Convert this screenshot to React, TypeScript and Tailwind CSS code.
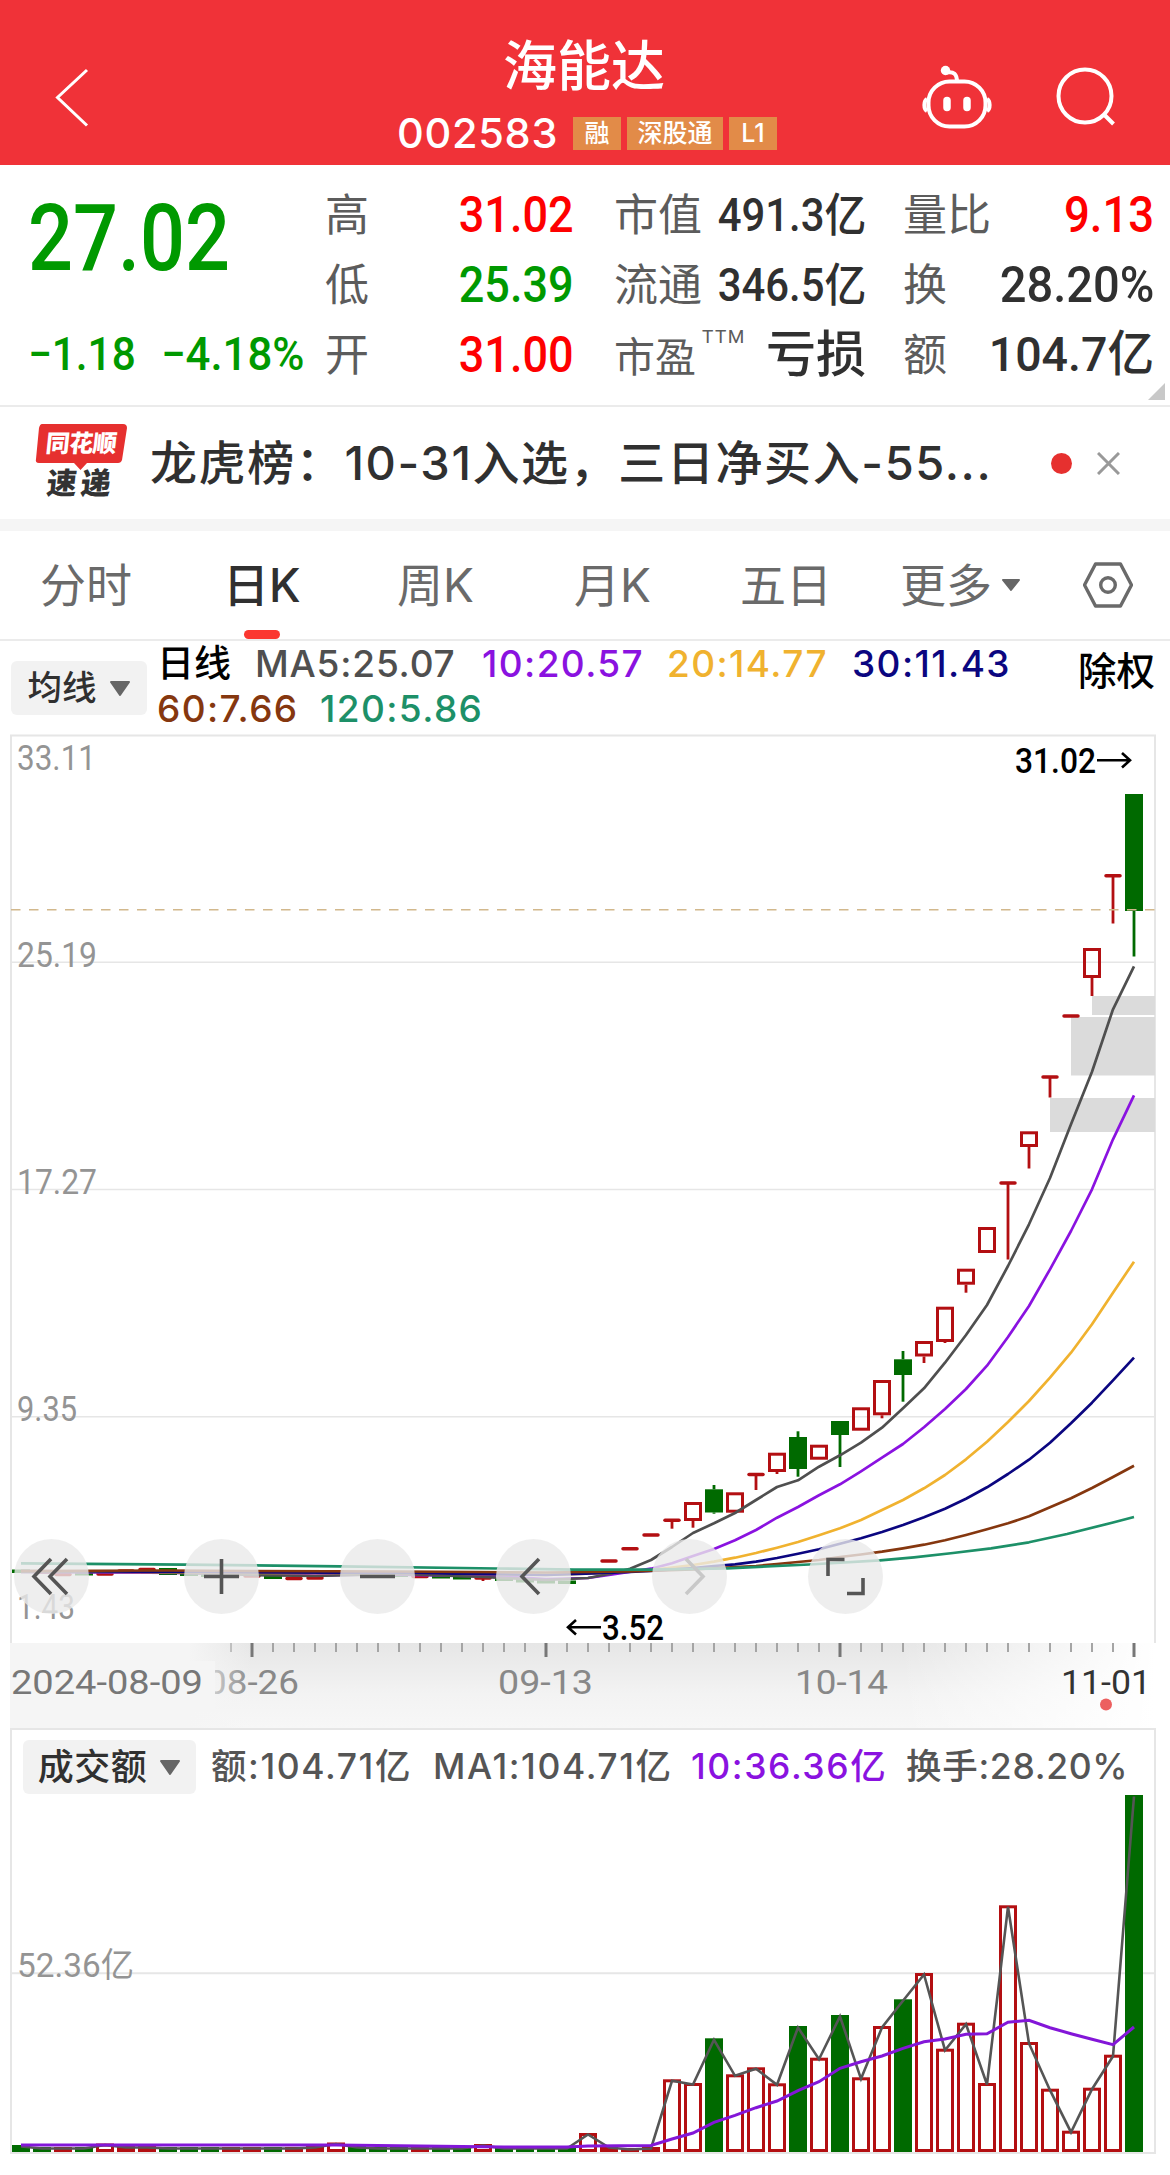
import React from 'react';
import clsx from 'clsx';

const CJK = "font-['Inter','Noto_Sans_CJK_SC',sans-serif]";
const DIN = "font-['Roboto','Noto_Sans_CJK_SC',sans-serif]";
const SVG_DIN = { fontFamily: "Roboto, 'Noto Sans CJK SC', sans-serif" };

const RED = '#b30f12';
const GREEN = '#006a00';

// Every trading day takes 21px, the first one is centered on 21
const dayX = (i: number) => 21 + i * 21;

interface Candle {
  i: number;
  type: 'up' | 'down' | 'flat';
  top: number;
  bottom?: number;
  high?: number;
  low?: number;
}

const candles: Candle[] = [
  { i: 0, type: 'down', top: 1568.5, bottom: 1572 },
  { i: 1, type: 'flat', top: 1571 },
  { i: 2, type: 'flat', top: 1573.5 },
  { i: 3, type: 'down', top: 1571, bottom: 1574.5 },
  { i: 4, type: 'flat', top: 1573 },
  { i: 5, type: 'flat', top: 1570 },
  { i: 6, type: 'flat', top: 1568.5 },
  { i: 7, type: 'down', top: 1567, bottom: 1574 },
  { i: 8, type: 'down', top: 1571, bottom: 1575 },
  { i: 9, type: 'down', top: 1572, bottom: 1576 },
  { i: 10, type: 'flat', top: 1575 },
  { i: 11, type: 'flat', top: 1575 },
  { i: 12, type: 'down', top: 1574, bottom: 1578 },
  { i: 13, type: 'flat', top: 1577.5 },
  { i: 14, type: 'flat', top: 1577 },
  { i: 15, type: 'flat', top: 1571 },
  { i: 16, type: 'down', top: 1571, bottom: 1575 },
  { i: 17, type: 'down', top: 1573, bottom: 1576 },
  { i: 18, type: 'down', top: 1573, bottom: 1576 },
  { i: 19, type: 'flat', top: 1575.5 },
  { i: 20, type: 'down', top: 1574, bottom: 1577.5 },
  { i: 21, type: 'down', top: 1575, bottom: 1578.5 },
  { i: 22, type: 'flat', top: 1577, low: 1580 },
  { i: 23, type: 'down', top: 1577, bottom: 1580 },
  { i: 24, type: 'down', top: 1578, bottom: 1581.5 },
  { i: 25, type: 'down', top: 1579, bottom: 1582.5 },
  { i: 26, type: 'down', top: 1579.5, bottom: 1583 },
  { i: 27, type: 'flat', top: 1571 },
  { i: 28, type: 'flat', top: 1560 },
  { i: 29, type: 'flat', top: 1547.7 },
  { i: 30, type: 'flat', top: 1534 },
  { i: 31, type: 'flat', top: 1519.3, low: 1527.7 },
  { i: 32, type: 'up', top: 1501, bottom: 1520, low: 1526.7 },
  { i: 33, type: 'down', top: 1488.3, bottom: 1511.5, high: 1484, low: 1512.7 },
  { i: 34, type: 'up', top: 1491.3, bottom: 1511.7 },
  { i: 35, type: 'flat', top: 1473.5, low: 1489 },
  { i: 36, type: 'up', top: 1451.7, bottom: 1471, low: 1473 },
  { i: 37, type: 'down', top: 1436, bottom: 1468, high: 1430.3, low: 1475.7 },
  { i: 38, type: 'up', top: 1443.7, bottom: 1458.7 },
  { i: 39, type: 'down', top: 1420, bottom: 1434, low: 1466 },
  { i: 40, type: 'up', top: 1406.3, bottom: 1429.7 },
  { i: 41, type: 'up', top: 1379, bottom: 1414.3, low: 1417.3 },
  { i: 42, type: 'down', top: 1358.3, bottom: 1374, high: 1350, low: 1400.7 },
  { i: 43, type: 'up', top: 1340, bottom: 1355.5, low: 1362 },
  { i: 44, type: 'up', top: 1305.7, bottom: 1341, low: 1342 },
  { i: 45, type: 'up', top: 1267.7, bottom: 1283.7, low: 1291.7 },
  { i: 46, type: 'up', top: 1226, bottom: 1252 },
  { i: 47, type: 'flat', top: 1182, low: 1258.5 },
  { i: 48, type: 'up', top: 1130.3, bottom: 1146, low: 1167.5 },
  { i: 49, type: 'flat', top: 1076, low: 1096.5 },
  { i: 50, type: 'flat', top: 1015 },
  { i: 51, type: 'up', top: 947, bottom: 977, low: 995 },
  { i: 52, type: 'flat', top: 874.7, low: 922.5 },
  { i: 53, type: 'down', top: 793, bottom: 910, low: 955.5 },
];

// Moving averages: a list of x,y pairs each, oldest first
const averages = [
  {
    color: '#8a12e0',
    points:
      '21,1571 105,1571.5 189,1572 252,1573 315,1574.5 378,1573.5 441,1574.5 504,1575.5 546,1578 588,1577 609,1574 651,1567.7 672,1562.3 693,1555 714,1548 735,1539.3 756,1529 777,1516.7 798,1506 819,1494.3 840,1483.3 861,1470.3 882,1456.7 903,1443 924,1426.3 945,1408 966,1388 987,1364.7 1008,1336 1029,1305 1050,1268.3 1071,1230 1092,1188.3 1113,1138.3 1134,1094.3',
  },
  {
    color: '#4f4f4f',
    points:
      '21,1571 147,1571 252,1574 315,1575 399,1573 483,1576 546,1579 588,1577 609,1573 630,1567.7 651,1559 672,1546 693,1532 714,1522.3 735,1512 756,1499 777,1486 798,1479.3 819,1465.7 840,1454.3 861,1441.7 882,1426.7 903,1407.3 924,1387.3 945,1361.7 966,1334 987,1304 1008,1265 1029,1223.3 1050,1177 1071,1123.3 1092,1070.7 1113,1008.3 1134,965.3',
  },
  {
    color: '#f0b22f',
    points:
      '21,1570 252,1572 399,1572 546,1574 609,1572 651,1569 672,1566.5 693,1564 714,1560.7 735,1556.7 756,1552 777,1546.7 798,1541 819,1534.3 840,1527.3 861,1519 882,1509 903,1499 924,1487.3 945,1474 966,1458.3 987,1440.7 1008,1421 1029,1400 1050,1376.7 1071,1351.7 1092,1323.3 1113,1291.7 1134,1260.7',
  },
  {
    color: '#0b0680',
    points:
      '21,1570 252,1571.5 399,1572 546,1574 609,1572 651,1570 693,1567 714,1565 735,1563.3 756,1560.7 777,1557 798,1552.7 819,1548.3 840,1542.7 861,1537.3 882,1531 903,1524 924,1516.3 945,1507.7 966,1497.7 987,1486.3 1008,1473 1029,1458.7 1050,1441.7 1071,1422.3 1092,1401.7 1113,1379.3 1134,1356.7',
  },
  {
    color: '#85370f',
    points:
      '21,1570 168,1569.5 252,1570 399,1570.5 546,1571.5 630,1570.5 693,1568.5 735,1566 756,1565 777,1563 798,1561 819,1559 840,1556 861,1553.5 882,1550.7 903,1547.3 924,1543.7 945,1539.3 966,1534 987,1528.3 1008,1522.3 1029,1515.3 1050,1506.3 1071,1497.3 1092,1487 1113,1476 1134,1464.7',
  },
  {
    color: '#1d9068',
    points:
      '21,1562.3 184,1563.7 340,1565.3 497,1567.5 574,1568.7 651,1568.7 727,1567.3 809,1563.5 880,1559.3 914,1556.3 953,1552 991,1547.3 1029,1541.3 1067,1533 1113,1521.5 1134,1516',
  },
];

interface Bar {
  top: number;
  up: boolean;
}

const up = (top: number): Bar => ({ top, up: true });
const down = (top: number): Bar => ({ top, up: false });

const volumes: Bar[] = [
  down(2145), down(2147), up(2147), down(2147), up(2143.5), up(2146), up(2146), down(2147), down(2147),
  down(2147), up(2147), up(2147), down(2147), up(2147), up(2146), up(2142.5), down(2146), down(2147),
  down(2147), up(2147), down(2147), down(2147), up(2144), down(2147), down(2147), down(2147), down(2147),
  up(2133), up(2146), up(2148), up(2147), up(2079.3), up(2083), down(2038.3), up(2074.3), up(2067.3),
  up(2083.3), down(2026), up(2057.7), down(2015), up(2077.3), up(2026), down(1999.3), up(1973), up(2048.7),
  up(2022.7), up(2083), up(1905.3), up(2042), up(2088.7), up(2130.7), up(2087.7), up(2054.7), down(1795),
];

const volumeMa10 = [
  2139, 2133, 2122.3, 2115.3, 2107.7, 2101, 2090.7, 2081.7, 2068.3, 2061.7, 2056, 2048.3, 2041.7, 2039, 2034.3,
  2033.7, 2022.3, 2020.3, 2027.7, 2033.7, 2039.3, 2044.7, 2027,
];

function Header() {
  return (
    <header className="flex h-[165px] items-start bg-[#f03238] text-white">
      <svg className="mt-[67px] ml-[52px]" width="40" height="62" viewBox="0 0 40 62" fill="none" stroke="white" strokeWidth="3">
        <path d="M35 3 L5.500 30.500 L35 58.500" />
      </svg>
      <div className="ml-[288px] flex w-[420px] flex-col items-center">
        <h1 className="mt-[37px] mr-3 text-[54px] leading-[60px] font-medium">海能达</h1>
        <div className="mt-4 flex h-[40px] w-full items-center pl-[17px] text-[25px] leading-[33px] font-medium">
          <span className="w-[176px] text-[41.5px] leading-10 tracking-[0.7px]">002583</span>
          <span className="w-12 bg-[#e28b48] text-center">融</span>
          <span className="ml-1.5 w-24 bg-[#e28b48] text-center">深股通</span>
          <span className="ml-1.5 w-12 bg-[#e28b48] text-center">L1</span>
        </div>
      </div>
      <svg className="mt-[50px] mr-5 ml-auto" width="250" height="90" viewBox="0 0 250 90" fill="none" stroke="white" strokeWidth="4">
        <circle cx="45.500" cy="20.500" r="4.700" fill="white" stroke="none" />
        <path d="M46 22.500 C54 21 57 24 57 32" />
        <rect x="28.500" y="31.500" width="57" height="45" rx="21" />
        <path d="M27 49 C23.500 51 23.500 59 27 61 M87 49 C90.500 51 90.500 59 87 61" />
        <path d="M47 50.500 V57.500 M67 50.500 V57.500" strokeWidth="7.500" strokeLinecap="round" />
        <circle cx="185" cy="46" r="26.500" />
        <path d="M203.500 64 L213.500 74" />
      </svg>
    </header>
  );
}

function StatRow({ label, value, className }: { label: React.ReactNode; value: string; className: string }) {
  return (
    <div className="flex h-[70px] items-center justify-between">
      <span className="text-[44px] whitespace-nowrap text-[#5c5c5c]">{label}</span>
      <span className={clsx('origin-right font-medium whitespace-nowrap', DIN, className)}>{value}</span>
    </div>
  );
}

function Quote() {
  return (
    <section className="relative flex h-[240px] pt-[15px]">
      <div className={clsx('w-[325px] pl-[28px] font-medium text-[#009900]', DIN)}>
        <div className="mt-[6px] h-[105px] origin-left scale-x-[0.86] text-[92px] leading-[105px]">27.02</div>
        <div className="mt-[28px] flex h-[70px] items-center text-[46px] whitespace-nowrap">
          <span className="w-[133px] origin-left scale-x-[0.92]">−1.18</span>
          <span className="origin-left scale-x-[0.95]">−4.18%</span>
        </div>
      </div>
      <div className="w-[249px]">
        <StatRow label="高" value="31.02" className="scale-x-[0.9] text-[50px] text-[#fe0000]" />
        <StatRow label="低" value="25.39" className="scale-x-[0.9] text-[50px] text-[#009900]" />
        <StatRow label="开" value="31.00" className="scale-x-[0.9] text-[50px] text-[#fe0000]" />
      </div>
      <div className="ml-10 w-[252px]">
        <StatRow label="市值" value="491.3亿" className="scale-x-[0.91] text-[46px] text-[#303030]" />
        <StatRow label="流通" value="346.5亿" className="scale-x-[0.91] text-[46px] text-[#303030]" />
        <StatRow
          label={
            <span className="flex pt-1.5 text-[41px]">
              市盈
              <sup className={clsx('top-0 ml-1.5 text-[19px] leading-none tracking-[1.5px]', DIN)}>TTM</sup>
            </span>
          }
          value="亏损"
          className="text-[50px] text-[#303030]"
        />
      </div>
      <div className="ml-[37px] w-[251px]">
        <StatRow label="量比" value="9.13" className="scale-x-[0.91] text-[50px] text-[#fe0000]" />
        <StatRow label="换" value="28.20%" className="scale-x-[0.94] text-[50px] text-[#303030]" />
        <StatRow label="额" value="104.7亿" className="scale-x-[0.95] text-[49px] text-[#303030]" />
      </div>
      <svg className="absolute right-[5px] bottom-[5px]" width="17" height="17" viewBox="0 0 17 17">
        <path d="M17 0 V17 H0 Z" fill="#c8c8c8" />
      </svg>
    </section>
  );
}

function NewsBar() {
  return (
    <section className="flex h-[114px] items-center border-t-2 border-[#ebebeb] pl-[35px]">
      <div className="relative h-[78px] w-[93px]">
        <svg className="absolute inset-0" width="93" height="78" viewBox="0 0 93 78">
          <path d="M7 0 H88 Q92 0 92 4 L87 36 Q86 39 83 39 H52 L45.500 46 L39 39 H4 Q0 39 1 35 L4 4 Q5 0 7 0 Z" fill="#e6302f" />
        </svg>
        <div className="relative -skew-x-6 pt-[7px] text-center text-[24px] leading-[26px] font-black tracking-[-0.5px] text-white">同花顺</div>
        <div className="relative -skew-x-6 pt-2.5 text-center text-[30px] leading-[32px] font-black tracking-[4px] text-[#333]">速递</div>
      </div>
      <p className="ml-[22px] w-[896px] text-[47px] font-medium tracking-[1.6px] whitespace-nowrap text-[#303030]">
        龙虎榜：10-31入选，三日净买入-55...
      </p>
      <span className="ml-[5px] size-[21px] rounded-full bg-[#e6302f]" />
      <svg className="ml-[25px]" width="23" height="23" viewBox="0 0 23 23" stroke="#999" strokeWidth="3">
        <path d="M1 1 L22 22 M22 1 L1 22" />
      </svg>
    </section>
  );
}

const tabs = [
  { label: '分时', width: 'w-[183px]' },
  { label: '日K', width: 'w-[174px]', active: true },
  { label: '周K', width: 'w-[177px]' },
  { label: '月K', width: 'w-[166px]' },
  { label: '五日', width: 'w-[160px]' },
];

function Tabs() {
  return (
    <nav className="flex h-[110px] items-center border-b-2 border-[#ebebeb] pl-[40px] text-[46px] text-[#6a6a6a]">
      {tabs.map((tab) => (
        <div key={tab.label} className={tab.width}>
          <div className={clsx('relative w-fit', tab.active && 'font-medium text-[#303030]')}>
            {tab.label}
            {tab.active && <span className="absolute -bottom-[19px] left-1/2 h-[9px] w-9 -translate-x-1/2 rounded-full bg-[#fb3730]" />}
          </div>
        </div>
      ))}
      <div className="flex w-[183px] items-center gap-[9px]">
        更多
        <svg width="20" height="13" viewBox="0 0 20 13">
          <path d="M2 1 H18 L10 11 Z" fill="#666" stroke="#666" strokeWidth="2" strokeLinejoin="round" />
        </svg>
      </div>
      <svg width="50" height="46" viewBox="0 0 50 46" fill="none" stroke="#6a6a6a" strokeWidth="3.400">
        <path d="M12.500 2 H37.500 L48.500 23 L37.500 44 H12.500 L1.500 23 Z" strokeLinejoin="round" />
        <circle cx="25" cy="23" r="7.300" />
      </svg>
    </nav>
  );
}

function Dropdown({ label, className }: { label: string; className: string }) {
  return (
    <button className={clsx('flex h-[54px] shrink-0 items-center justify-center rounded-md bg-[#f2f2f2] font-medium text-[#303030]', className)}>
      {label}
      <svg width="22" height="17" viewBox="0 0 22 17">
        <path d="M2 2 H20 L11 15 Z" fill="#666" stroke="#666" strokeWidth="2" strokeLinejoin="round" />
      </svg>
    </button>
  );
}

function MaLegend() {
  return (
    <div className="flex h-[93px] pl-[11px]">
      <Dropdown label="均线" className="mt-5 w-[136px] gap-3 text-[34.5px]" />
      <div className="ml-[10px] w-[908px] text-[37px] leading-[45px] font-medium tracking-[1.4px] whitespace-nowrap">
        <div className="flex">
          <span className="w-[98px] tracking-normal text-black">日线</span>
          <span className="w-[227px] tracking-[0.8px] text-[#4f4f4f]">MA5:25.07</span>
          <span className="w-[185px] text-[#8a12e0]">10:20.57</span>
          <span className="w-[185px] text-[#f0b22f]">20:14.77</span>
          <span className="text-[#0b0680]">30:11.43</span>
        </div>
        <div className="flex">
          <span className="w-[163px] text-[#85370f]">60:7.66</span>
          <span className="text-[#1d9068]">120:5.86</span>
        </div>
      </div>
      <span className="mt-[2px] ml-[13px] text-[38.5px] font-medium whitespace-nowrap text-black">除权</span>
    </div>
  );
}

function CandleShape({ candle }: { candle: Candle }) {
  const x = dayX(candle.i);
  const { type, top, bottom = candle.top, high, low } = candle;
  const color = type === 'down' ? GREEN : RED;

  return (
    <g stroke={color} fill="none">
      {high && <path d={`M${x} ${high} V${top}`} strokeWidth="2.800" />}
      {low && <path d={`M${x} ${bottom} V${low}`} strokeWidth="2.800" />}
      {type === 'flat' && <path d={`M${x - 7} ${top} H${x + 7}`} strokeWidth="3.500" strokeLinecap="round" />}
      {type === 'up' && <rect x={x - 7.5} y={top + 1.5} width="15" height={bottom - top - 3} strokeWidth="3" />}
      {type === 'down' && <rect x={x - 9} y={top} width="18" height={bottom - top} fill={color} stroke="none" />}
    </g>
  );
}

const priceLabels = [
  { text: '33.11', y: 769, width: 79 },
  { text: '25.19', y: 966, width: 80 },
  { text: '17.27', y: 1193, width: 80 },
  { text: '9.35', y: 1420, width: 60 },
  { text: '1.43', y: 1618, width: 58 },
];

const tools = [
  { name: 'first', left: 'left-[14px]', path: 'M37 20 L20 37.500 L37 55 M53 20 L36 37.500 L53 55' },
  { name: 'zoom-in', left: 'left-[184px]', path: 'M20 37.500 H55 M37.500 20 V55' },
  { name: 'zoom-out', left: 'left-[340px]', path: 'M20 37.500 H55' },
  { name: 'prev', left: 'left-[496px]', path: 'M43 20 L26 37.500 L43 55' },
  { name: 'next', left: 'left-[652px]', path: 'M34 20 L51 37.500 L34 55', disabled: true },
  { name: 'fullscreen', left: 'left-[808px]', path: 'M20 37 V20.500 H36.500 M39 54.500 H55 V39' },
];

function PriceChart() {
  return (
    <div className="relative h-[909px]">
      <svg className="block overflow-visible" width="1170" height="909" viewBox="0 733 1170 909">
        <g fill="none" stroke="#e6e6e6" strokeWidth="2">
          <path d="M11 1642 V734.500 H1155 V1642" />
          <path d="M11 961.300 H1155 M11 1188.600 H1155 M11 1415.800 H1155" strokeWidth="1.500" />
        </g>
        {/* Price gaps that are still open */}
        <g fill="#dbdbdb">
          <rect x="1092" y="995" width="63" height="19" />
          <rect x="1071" y="1016" width="84" height="58.500" />
          <rect x="1050" y="1097" width="105" height="34" />
        </g>
        <g fill="#949494" fontSize="35" style={SVG_DIN}>
          {priceLabels.map((l) => (
            <text key={l.text} x="17" y={l.y} textLength={l.width} lengthAdjust="spacingAndGlyphs">
              {l.text}
            </text>
          ))}
        </g>
        {candles.map((c) => (
          <CandleShape key={c.i} candle={c} />
        ))}
        <path d="M11 908.700 H1155" stroke="#d2b88c" strokeWidth="1.500" strokeDasharray="9.500 8.500" />
        {averages.map((a) => (
          <polyline key={a.color} points={a.points} fill="none" stroke={a.color} strokeWidth="2.700" strokeLinejoin="round" />
        ))}
        <g fill="#000" fontSize="35" fontWeight="500" style={SVG_DIN}>
          <text x="1015" y="772" textLength="81" lengthAdjust="spacingAndGlyphs">31.02</text>
          <text x="602" y="1639" textLength="62" lengthAdjust="spacingAndGlyphs">3.52</text>
        </g>
        <g fill="none" stroke="#000" strokeWidth="2.600">
          <path d="M1097 759.300 H1130 M1122 752 L1130 759.300 L1122 766.500" />
          <path d="M601 1626.300 H568 M576 1619 L568 1626.300 L576 1633.500" />
        </g>
      </svg>
      {tools.map((tool) => (
        <button key={tool.name} className={clsx('absolute bottom-[29px] size-[75px] rounded-full bg-[#eaeaea]/80', tool.left)}>
          <svg width="75" height="75" viewBox="0 0 75 75" fill="none" stroke={tool.disabled ? '#c8c8c8' : '#555'} strokeWidth="3.600">
            <path d={tool.path} />
          </svg>
        </button>
      ))}
    </div>
  );
}

const dates = [
  { text: '08-26', x: 206, width: 93, color: '#888' },
  { text: '09-13', x: 498, width: 95, color: '#888' },
  { text: '10-14', x: 795, width: 93, color: '#888' },
  { text: '11-01', x: 1061, width: 90, color: '#333' },
];

function DateAxis() {
  return (
    <svg className="block" width="1170" height="85" viewBox="0 1642 1170 85">
      <defs>
        <linearGradient id="axisShade" x1="0" y1="0" x2="0" y2="1">
          <stop offset="0" stopColor="#e6e6e6" />
          <stop offset="0.6" stopColor="#f3f3f3" />
          <stop offset="1" stopColor="#f7f7f7" />
        </linearGradient>
        <linearGradient id="axisLeft" x1="0" y1="0" x2="1" y2="0">
          <stop offset="0.74" stopColor="#f5f5f5" />
          <stop offset="1" stopColor="#f5f5f5" stopOpacity="0" />
        </linearGradient>
        <linearGradient id="axisRight" x1="0" y1="0" x2="1" y2="0">
          <stop offset="0" stopColor="#fff" stopOpacity="0" />
          <stop offset="1" stopColor="#fff" />
        </linearGradient>
      </defs>
      <rect x="10" y="1642" width="1145" height="85" fill="url(#axisShade)" />
      <rect x="900" y="1642" width="255" height="85" fill="url(#axisRight)" />
      {Array.from({ length: 44 }, (_, n) => n + 10).map((i) => {
        const major = i === 11 || i === 25 || i === 39 || i === 53;
        return (
          <path
            key={i}
            d={`M${dayX(i)} 1642 V${major ? 1656 : 1651}`}
            stroke={major ? '#777' : '#a5a5a5'}
            strokeWidth={major ? 3 : 2}
          />
        );
      })}
      <g fontSize="34" style={SVG_DIN}>
        {dates.map((d) => (
          <text key={d.text} x={d.x} y="1693" fill={d.color} textLength={d.width} lengthAdjust="spacingAndGlyphs">
            {d.text}
          </text>
        ))}
        <rect x="10" y="1642" width="242" height="85" fill="url(#axisLeft)" />
        <rect x="10" y="1660" width="205" height="50" fill="#f5f5f5" />
        <text x="11" y="1693" fill="#777" textLength="192" lengthAdjust="spacingAndGlyphs">2024-08-09</text>
      </g>
      <circle cx="1106" cy="1703.500" r="6" fill="#ec5f5f" />
    </svg>
  );
}

function VolumeChart() {
  const lastFlat = 30;
  const tops = volumes.map((v, i) => `${dayX(i)},${v.top + 1.5}`).join(' ');
  const ma10 = volumeMa10.map((y, n) => `${dayX(lastFlat + 1 + n)},${y}`).join(' ');

  return (
    <section className="mr-[14px] ml-[10px] h-[426px] border-2 border-[#e6e6e6]">
      <div className="flex h-[65px] items-center pt-[9px] pl-[11px] text-[35.5px] font-medium tracking-[1.6px] whitespace-nowrap text-[#555]">
        <Dropdown label="成交额" className="w-[173px] gap-3 text-[36px] tracking-[0.5px]" />
        <span className="ml-[15px] w-[222px]">额:104.71亿</span>
        <span className="w-[258px]">MA1:104.71亿</span>
        <span className="w-[215px] text-[#8a12e0]">10:36.36亿</span>
        <span className="tracking-[0.7px]">换手:28.20%</span>
      </div>
      <svg className="block overflow-visible" width="1142" height="357" viewBox="12 1795 1142 357">
        <path d="M12 1973.300 H1154" stroke="#e6e6e6" strokeWidth="2" />
        <text x="17" y="1977" fontSize="34" fill="#949494" textLength="117" lengthAdjust="spacingAndGlyphs" style={SVG_DIN}>
          52.36亿
        </text>
        {volumes.map((v, i) =>
          v.up ? (
            <rect
              key={i}
              x={dayX(i) - 7.5}
              y={v.top + 1.5}
              width="15"
              height={Math.max(2150.5 - v.top - 1.5, 1)}
              fill="none"
              stroke={RED}
              strokeWidth="3"
            />
          ) : (
            <rect key={i} x={dayX(i) - 9} y={v.top} width="18" height={2152 - v.top} fill={GREEN} />
          )
        )}
        <polyline points={tops} fill="none" stroke="#555" strokeWidth="2.600" />
        <polyline
          points={`21,2145 147,2145 ${dayX(15)},2145 ${dayX(23)},2147 ${dayX(26)},2147 ${dayX(27)},2146 ${dayX(lastFlat)},2145.500 ${ma10}`}
          fill="none"
          stroke="#8316d8"
          strokeWidth="3"
        />
      </svg>
    </section>
  );
}

function App() {
  return (
    <div className={clsx('h-[2175px] w-[1170px] overflow-hidden bg-white', CJK)}>
      <Header />
      <Quote />
      <NewsBar />
      <div className="h-3 bg-[#f5f5f5]" />
      <Tabs />
      <MaLegend />
      <PriceChart />
      <DateAxis />
      <VolumeChart />
    </div>
  );
}

export default App;
